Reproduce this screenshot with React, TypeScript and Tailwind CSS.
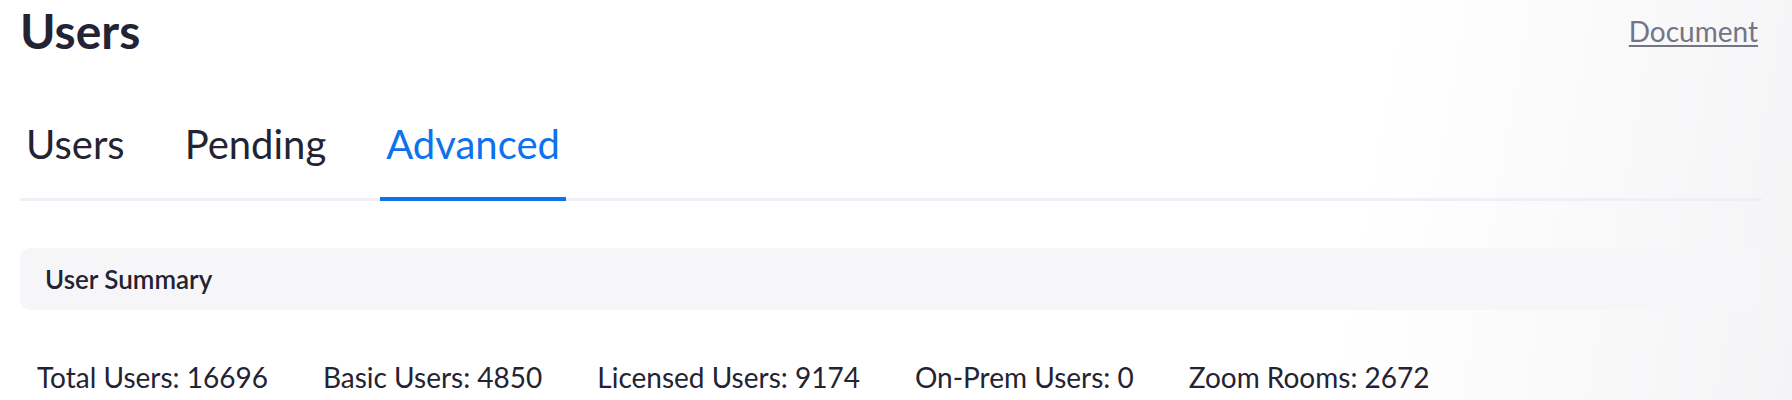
import React from 'react'

const stats = [
  { label: 'Total Users', value: 16696 },
  { label: 'Basic Users', value: 4850 },
  { label: 'Licensed Users', value: 9174 },
  { label: 'On-Prem Users', value: 0 },
  { label: 'Zoom Rooms', value: 2672 },
]

const tabs = ['Users', 'Pending', 'Advanced']

export default function App() {
  const active = 'Advanced'

  return (
    <div
      className="min-h-[400px] w-full bg-[linear-gradient(100deg,#ffffff_75%,#f4f4f6_100%)] pl-5 pr-[30px] text-[#232333]"
      style={{ fontFamily: 'Lato, "Open Sans", sans-serif' }}
    >
      {/* Header */}
      <div className="flex items-start justify-between">
        <h1 className="pt-[2px] text-[48px] font-bold leading-[58px]">Users</h1>
        <a
          href="#"
          className="mt-[15px] mr-[4px] text-[28px] leading-[32px] text-[#747487] underline underline-offset-[3px]"
        >
          Document
        </a>
      </div>

      {/* Tabs */}
      <div className="mt-[60px] flex gap-[48px] border-b-[3px] border-[#efeff5]">
        {tabs.map((t) => (
          <button
            key={t}
            className={
              t === active
                ? '-mb-[3px] border-b-4 border-[#0e72ed] px-[6px] pb-[29px] text-[40px] leading-[48px] text-[#0e72ed]'
                : 'px-[6px] pb-[30px] text-[40px] leading-[48px] text-[#232333]'
            }
          >
            {t}
          </button>
        ))}
      </div>

      {/* User Summary */}
      <div className="mt-[47px] flex h-[62px] items-center rounded-[10px] bg-[#f6f6f9] px-[25px]">
        <span className="text-[26px] font-semibold">User Summary</span>
      </div>

      <div className="mt-[50px] flex gap-[55px] pl-[17px] text-[28px] leading-[34px]">
        {stats.map((s) => (
          <span key={s.label}>
            {s.label}: {s.value}
          </span>
        ))}
      </div>
    </div>
  )
}
